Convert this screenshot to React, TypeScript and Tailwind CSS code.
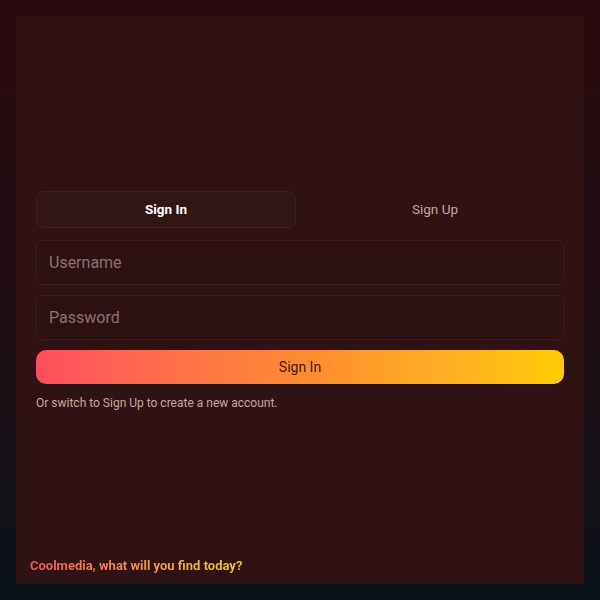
import React from "react";

export default function App() {
  return (
    <div
      className="w-[600px] h-[600px] p-4 bg-gradient-to-b from-[#2a0a0e] via-[#1e0d12] to-[#0b121a]"
      style={{ fontFamily: "Roboto, 'Noto Sans', sans-serif" }}
    >
      <div className="w-full h-full bg-[#2e1214] flex flex-col">
        <div className="flex-1 flex flex-col justify-center px-5 pt-[45px]">
          <div className="flex gap-[10px]">
            <button className="flex-1 h-[37px] rounded-lg border border-[#3d211d] bg-[#311714] text-white font-bold text-[13.5px]">
              Sign In
            </button>
            <button className="flex-1 h-[37px] rounded-lg text-[#c9a79f] text-[13.5px]">
              Sign Up
            </button>
          </div>
          <input
            placeholder="Username"
            className="mt-3 h-[45px] w-full rounded-md border border-[#3a1c1c] bg-[#2c1113] px-3 text-[16px] text-white placeholder:text-[#8c7470] outline-none"
          />
          <input
            placeholder="Password"
            type="password"
            className="mt-[10px] h-[45px] w-full rounded-md border border-[#3a1c1c] bg-[#2c1113] px-3 text-[16px] text-white placeholder:text-[#8c7470] outline-none"
          />
          <button className="mt-[10px] h-[34px] w-full rounded-[10px] bg-gradient-to-r from-[#ff4d5c] via-[#ff8a30] to-[#ffcc00] text-[#3a1a14] text-[14px]">
            Sign In
          </button>
          <p className="mt-[10px] text-[12px] text-[#c9aaa0]">
            Or switch to Sign Up to create a new account.
          </p>
        </div>
        <div className="pl-[14px] pb-[9px] h-[42px] flex items-end">
          <span className="font-bold text-[13px] bg-gradient-to-r from-[#f0565e] to-[#f8c81c] bg-clip-text text-transparent">
            Coolmedia, what will you find today?
          </span>
        </div>
      </div>
    </div>
  );
}
